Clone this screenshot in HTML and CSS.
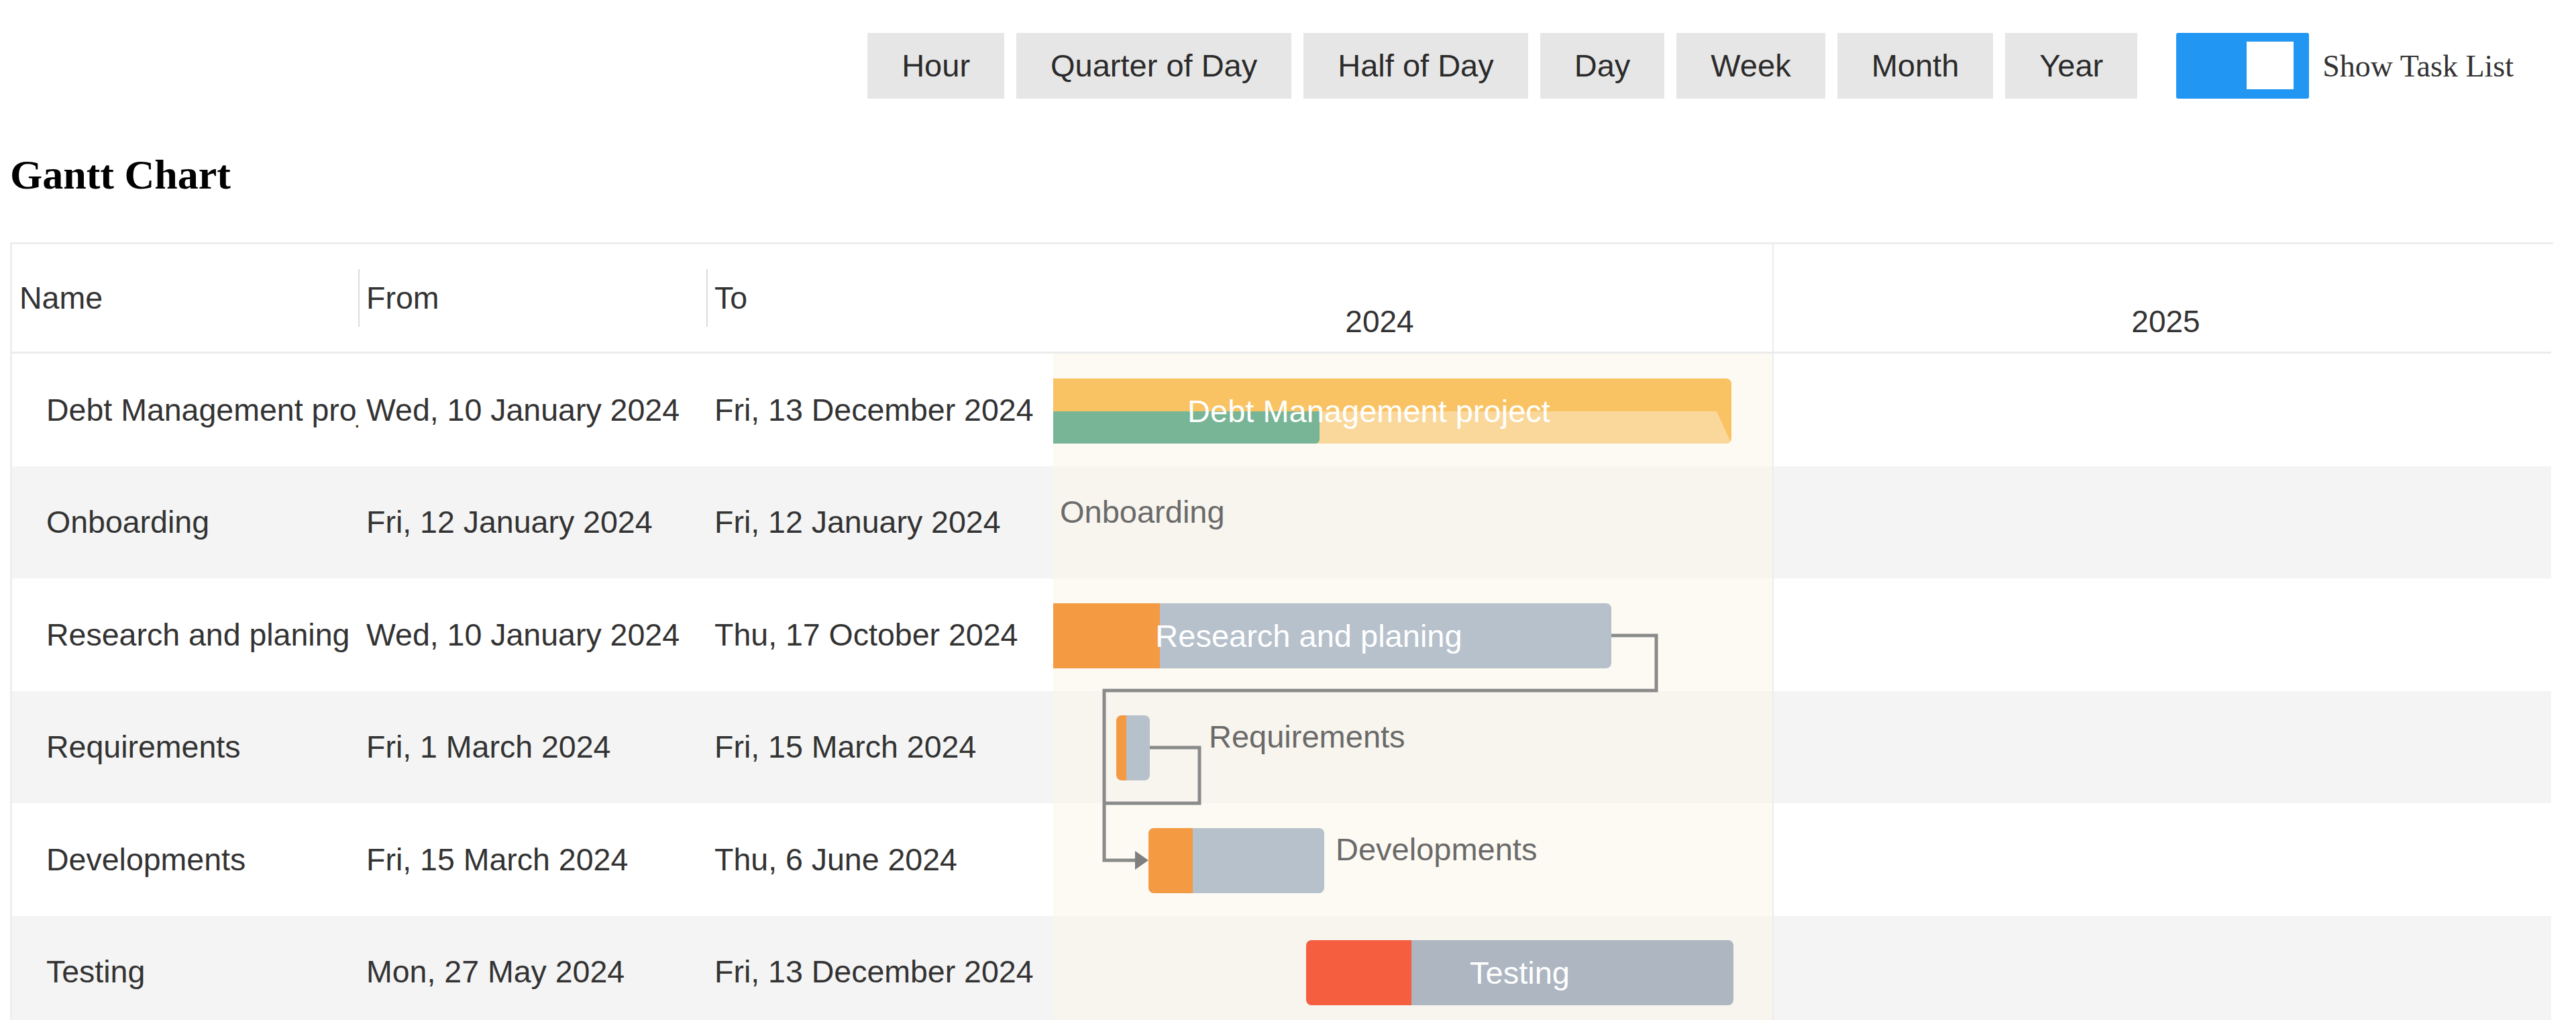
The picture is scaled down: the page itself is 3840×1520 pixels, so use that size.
FILE: index.html
```html
<!DOCTYPE html>
<html lang="en">
<head>
<meta charset="utf-8">
<title>Gantt Chart</title>
<link rel="stylesheet" href="styles.css">
</head>
<body>
<div class="toolbar">
  <div class="scales">
    <button class="btn">Hour</button>
    <button class="btn">Quarter of Day</button>
    <button class="btn">Half of Day</button>
    <button class="btn">Day</button>
    <button class="btn">Week</button>
    <button class="btn">Month</button>
    <button class="btn">Year</button>
  </div>
  <div class="toggle"><span class="knob"></span></div>
  <span class="toggle-label">Show Task List</span>
</div>

<div class="title">Gantt Chart</div>

<div class="gantt">
  <div class="tasklist">
    <div class="tl-head">
      <div class="th c-name"><span class="th-in">Name</span></div>
      <div class="th c-from"><span class="th-in sep">From</span></div>
      <div class="th c-to"><span class="th-in sep">To</span></div>
    </div>
    <div class="tl-row">
      <div class="td c-name">Debt Management project</div>
      <div class="td c-from">Wed, 10 January 2024</div>
      <div class="td c-to">Fri, 13 December 2024</div>
    </div>
    <div class="tl-row alt">
      <div class="td c-name">Onboarding</div>
      <div class="td c-from">Fri, 12 January 2024</div>
      <div class="td c-to">Fri, 12 January 2024</div>
    </div>
    <div class="tl-row">
      <div class="td c-name">Research and planing</div>
      <div class="td c-from">Wed, 10 January 2024</div>
      <div class="td c-to">Thu, 17 October 2024</div>
    </div>
    <div class="tl-row alt">
      <div class="td c-name">Requirements</div>
      <div class="td c-from">Fri, 1 March 2024</div>
      <div class="td c-to">Fri, 15 March 2024</div>
    </div>
    <div class="tl-row">
      <div class="td c-name">Developments</div>
      <div class="td c-from">Fri, 15 March 2024</div>
      <div class="td c-to">Thu, 6 June 2024</div>
    </div>
    <div class="tl-row alt">
      <div class="td c-name">Testing</div>
      <div class="td c-from">Mon, 27 May 2024</div>
      <div class="td c-to">Fri, 13 December 2024</div>
    </div>
  </div>

  <div class="chart">
    <div class="canvas">
      <div class="ch-head">
        <div class="year y24">2024</div>
        <div class="year y25">2025</div>
      </div>
      <div class="ch-body">
        <div class="crow"><div class="cell y24"></div><div class="cell y25"></div></div>
        <div class="crow alt"><div class="cell y24"></div><div class="cell y25"></div></div>
        <div class="crow"><div class="cell y24"></div><div class="cell y25"></div></div>
        <div class="crow alt"><div class="cell y24"></div><div class="cell y25"></div></div>
        <div class="crow"><div class="cell y24"></div><div class="cell y25"></div></div>
        <div class="crow alt"><div class="cell y24"></div><div class="cell y25"></div></div>

        <svg class="links" width="2342" height="1005" viewBox="0 0 2342 1005">
          <path d="M931 420 H998 V502 H175 V755 H226" />
          <path d="M243 587 H317 V670 H175" />
          <polygon points="221,741 241,755 221,769" />
        </svg>

        <div class="bar summary" style="left:29px; top:37px; width:1081px;">
          <span class="strip"></span>
          <span class="prog green" style="width:467px;"></span>
          <span class="label">Debt Management project</span>
        </div>

        <span class="olabel" style="left:109px; top:209px;">Onboarding</span>

        <div class="bar" style="left:29px; top:372px; width:902px;">
          <span class="prog" style="width:229px;"></span>
          <span class="label">Research and planing</span>
        </div>

        <div class="bar" style="left:193px; top:539px; width:50px;">
          <span class="prog" style="width:15px;"></span>
        </div>
        <span class="olabel" style="left:331px; top:544px;">Requirements</span>

        <div class="bar" style="left:241px; top:707px; width:262px;">
          <span class="prog" style="width:66px;"></span>
        </div>
        <span class="olabel" style="left:520px; top:712px;">Developments</span>

        <div class="bar testing" style="left:476px; top:874px; width:637px;">
          <span class="prog red" style="width:157px;"></span>
          <span class="label">Testing</span>
        </div>
      </div>
    </div>
  </div>
</div>
</body>
</html>
```

FILE: styles.css
```css
html, body {
  margin: 0;
  padding: 0;
  background: #ffffff;
}

body {
  width: 3840px;
  height: 1520px;
  overflow: hidden;
  font-family: "Liberation Sans", Arial, sans-serif;
  color: #333333;
}

/* ---------- toolbar ---------- */
.toolbar {
  display: flex;
  justify-content: flex-end;
  align-items: center;
  padding: 49px 93px 0 0;
}

.scales {
  display: flex;
  gap: 18px;
}

.btn {
  height: 98px;
  padding: 0 51px;
  border: none;
  border-radius: 0;
  background: #e6e6e6;
  color: #2b2b2b;
  font-family: "Liberation Sans", Arial, sans-serif;
  font-size: 47px;
  line-height: 98px;
}

.toggle {
  position: relative;
  width: 198px;
  height: 98px;
  margin-left: 58px;
  background: #2196f3;
  border-radius: 3px;
}

.knob {
  position: absolute;
  top: 13px;
  right: 23px;
  width: 70px;
  height: 71px;
  background: #ffffff;
}

.toggle-label {
  margin-left: 20px;
  font-family: "Liberation Serif", "Times New Roman", serif;
  font-size: 46px;
  color: #333333;
}

/* ---------- title ---------- */
.title {
  margin: 77px 0 0 15px;
  font-family: "Liberation Serif", "Times New Roman", serif;
  font-weight: bold;
  font-size: 62px;
  line-height: 72px;
  color: #000000;
}

/* ---------- gantt ---------- */
.gantt {
  display: flex;
  margin: 65px 0 0 15px;
  width: 3788px;
  border-top: 3px solid #eeeeee;
  border-left: 3px solid #eeeeee;
}

.tasklist {
  width: 1552px;
  flex: none;
  font-size: 46.5px;
}

.tl-head {
  display: flex;
  height: 160px;
  border-bottom: 3px solid #ececec;
}

.th {
  display: flex;
  align-items: center;
}

.th-in {
  display: flex;
  align-items: center;
  height: 86px;
  padding-left: 11px;
}

.th-in.sep {
  border-left: 2px solid #dcdcdc;
  padding-left: 10px;
}

.c-name { width: 516px; }
.c-from { width: 519px; }
.c-to { width: 517px; }

.tl-row {
  display: flex;
  height: 167.5px;
  background: #ffffff;
}

.tl-row.alt {
  background: #f4f4f4;
}

.td {
  display: flex;
  align-items: center;
  overflow: hidden;
  white-space: nowrap;
  padding-left: 12px;
  box-sizing: border-box;
}

.td.c-name {
  padding-left: 51px;
}

/* ---------- chart ---------- */
.chart {
  width: 2233px;
  flex: none;
  overflow: hidden;
}

.canvas {
  width: 2342px;
  margin-left: -99px;
}

.ch-head {
  display: flex;
  height: 160px;
  border-bottom: 3px solid #ececec;
}

.year {
  width: 1171px;
  box-sizing: border-box;
  display: flex;
  align-items: flex-end;
  justify-content: center;
  padding-bottom: 18px;
  font-size: 46px;
  color: #333333;
}

.year.y25,
.cell.y25 {
  border-left: 2px solid #ececec;
}

.ch-body {
  position: relative;
}

.crow {
  display: flex;
  height: 167.5px;
}

.cell {
  width: 1171px;
  box-sizing: border-box;
}

.crow .cell.y24 { background: #fcfaf2; }
.crow .cell.y25 { background: #ffffff; }
.crow.alt .cell.y24 { background: #f7f5ee; }
.crow.alt .cell.y25 { background: #f4f4f4; }

.links {
  position: absolute;
  left: 0;
  top: 0;
}

.links path {
  fill: none;
  stroke: #8a8a8a;
  stroke-width: 5;
}

.links polygon {
  fill: #7f7f7f;
}

.bar {
  position: absolute;
  height: 97px;
  border-radius: 8px;
  background: #b7c1cc;
  overflow: hidden;
  display: flex;
  align-items: center;
  justify-content: center;
}

.bar.testing {
  background: #adb6c1;
}

.prog {
  position: absolute;
  left: 0;
  top: 0;
  bottom: 0;
  background: #f39a42;
  border-radius: 8px 0 0 8px;
}

.prog.red {
  background: #f55e3f;
}

.bar.summary {
  background: #f9c262;
}

.strip {
  position: absolute;
  left: 0;
  right: 0;
  top: 49px;
  bottom: 0;
  background: #fad89b;
  clip-path: polygon(0 0, calc(100% - 22px) 0, 100% 100%, 0 100%);
}

.prog.green {
  top: 49px;
  background: #78b597;
  border-radius: 0 0 6px 8px;
}

.label {
  position: relative;
  color: #ffffff;
  font-size: 47px;
  white-space: nowrap;
}

.olabel {
  position: absolute;
  font-size: 47px;
  line-height: 54px;
  color: #6a6a6a;
  white-space: nowrap;
}
```
